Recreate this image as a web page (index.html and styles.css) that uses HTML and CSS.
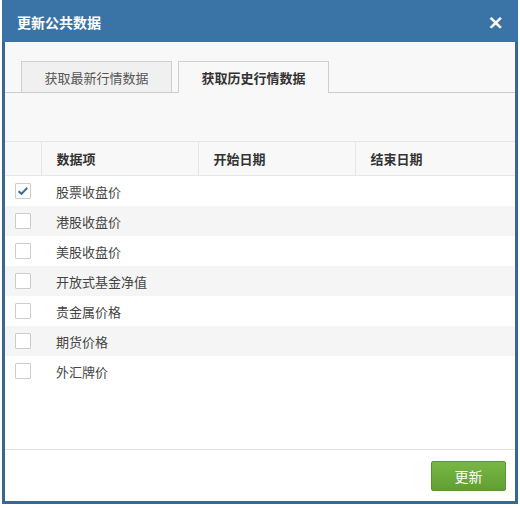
FILE: index.html
```html
<!DOCTYPE html>
<html>
<head>
<meta charset="utf-8">
<link rel="stylesheet" href="styles.css">
</head>
<body>
<div class="dialog">
  <div class="dlg-head">
    <span class="title">更新公共数据</span>
    <span class="close">×</span>
  </div>
  <div class="dlg-body">
    <div class="tabs-area">
      <div class="tabs">
        <div class="tab">获取最新行情数据</div>
        <div class="tab active">获取历史行情数据</div>
      </div>
    </div>
    <table class="grid">
      <colgroup>
        <col class="c-chk"><col class="c-name"><col class="c-date"><col>
      </colgroup>
      <thead>
        <tr><th></th><th>数据项</th><th>开始日期</th><th>结束日期</th></tr>
      </thead>
      <tbody>
        <tr><td><span class="chk on"><svg viewBox="0 0 16 16" width="14" height="14"><path d="M3 8.2 L6.3 11.3 L12.8 4.4" fill="none" stroke="#3a6a94" stroke-width="2.4"/></svg></span></td><td>股票收盘价</td><td></td><td></td></tr>
        <tr><td><span class="chk"></span></td><td>港股收盘价</td><td></td><td></td></tr>
        <tr><td><span class="chk"></span></td><td>美股收盘价</td><td></td><td></td></tr>
        <tr><td><span class="chk"></span></td><td>开放式基金净值</td><td></td><td></td></tr>
        <tr><td><span class="chk"></span></td><td>贵金属价格</td><td></td><td></td></tr>
        <tr><td><span class="chk"></span></td><td>期货价格</td><td></td><td></td></tr>
        <tr><td><span class="chk"></span></td><td>外汇牌价</td><td></td><td></td></tr>
      </tbody>
    </table>
  </div>
  <div class="dlg-foot">
    <button class="btn-ok">更新</button>
  </div>
</div>
</body>
</html>
```
FILE: styles.css
```css
html, body {
  margin: 0;
  padding: 0;
  background: #ffffff;
}
body {
  font-family: "Noto Sans CJK SC", "Microsoft YaHei", sans-serif;
  font-size: 13px;
  color: #333;
}
.dialog {
  box-sizing: border-box;
  margin-left: 2px;
  width: 516px;
  height: 504px;
  border: 3px solid #386791;
  border-top: 0;
  display: flex;
  flex-direction: column;
  background: #fff;
}
.dlg-head {
  height: 42px;
  flex: none;
  background: #3a73a5;
  color: #fff;
  display: flex;
  align-items: center;
  justify-content: space-between;
  padding: 0 12px 0 12px;
  margin: 0 -3px;
}
.title {
  font-size: 14px;
  font-weight: bold;
  padding-left: 3px;
  padding-top: 2px;
}
.close {
  font-size: 20px;
  font-weight: bold;
  font-family: "DejaVu Sans", sans-serif;
  line-height: 1;
  padding-top: 2px;
  margin-right: 2px;
}
.dlg-body {
  flex: 1;
  display: flex;
  flex-direction: column;
}
.tabs-area {
  background: #f8f8f8;
  padding: 19px 0 48px;
}
.tabs {
  display: flex;
  gap: 6px;
  padding-left: 16px;
  border-bottom: 1px solid #cccccc;
  height: 31px;
}
.tab {
  box-sizing: border-box;
  width: 151px;
  height: 31px;
  border: 1px solid #cfcfcf;
  border-bottom: 0;
  background: #f0f0f0;
  color: #555;
  display: flex;
  align-items: center;
  justify-content: center;
  font-size: 13px;
}
.tab.active {
  height: 32px;
  background: #f8f8f8;
  color: #333;
  font-weight: bold;
}
.grid {
  width: 100%;
  border-collapse: collapse;
  table-layout: fixed;
}
.c-chk { width: 36px; }
.c-name { width: 157px; }
.c-date { width: 157px; }
.grid th {
  height: 33px;
  background: #f8f8f8;
  border-top: 1px solid #e6e6e6;
  border-bottom: 1px solid #e6e6e6;
  border-left: 1px solid #e6e6e6;
  text-align: left;
  padding: 0 0 0 15px;
  font-weight: bold;
  color: #333;
  font-size: 13px;
}
.grid th:first-child { border-left: 0; }
.grid td {
  height: 30px;
  padding: 0 0 0 15px;
  color: #444;
}
.grid td:first-child {
  padding: 0 0 0 10px;
}
.grid tbody tr:nth-child(even) td { background: #f5f5f5; }
.chk {
  box-sizing: border-box;
  display: flex;
  align-items: center;
  justify-content: center;
  width: 16px;
  height: 16px;
  border: 1px solid #cccccc;
  background: #fff;
  border-radius: 1px;
}
.dlg-foot {
  flex: none;
  border-top: 1px solid #e3e3e3;
  height: 52px;
  display: flex;
  justify-content: flex-end;
  align-items: flex-start;
  padding: 11px 9px 0 0;
  box-sizing: border-box;
}
.btn-ok {
  width: 75px;
  height: 30px;
  border: 1px solid #5b9532;
  border-radius: 2px;
  background: linear-gradient(#78b646, #619f33);
  color: #fff;
  font-family: "Noto Sans CJK SC", sans-serif;
  font-size: 14px;
  padding: 0;
}
```
